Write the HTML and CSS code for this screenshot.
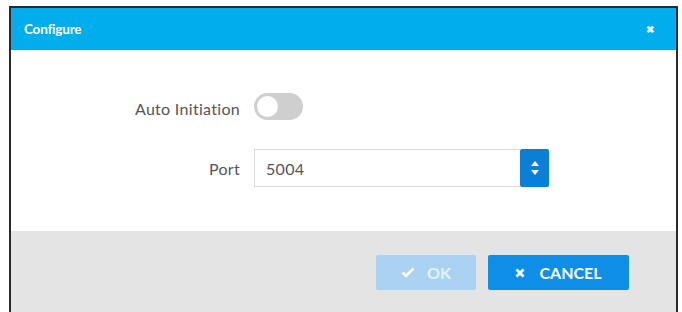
FILE: index.html
```html
<!DOCTYPE html>
<html>
<head>
<meta charset="utf-8">
<link rel="stylesheet" href="styles.css">
</head>
<body>
<div class="dialog">
  <div class="header">
    <span class="title">Configure</span>
    <span class="close">&#x2716;</span>
  </div>
  <div class="body">
    <div class="row row-toggle">
      <label class="label">Auto Initiation</label>
      <span class="toggle"><span class="knob"></span></span>
    </div>
    <div class="row row-port">
      <label class="label">Port</label>
      <div class="numfield">
        <span class="value">5004</span>
        <span class="spin">
          <svg width="10" height="20" viewBox="0 0 10 20"><path d="M5 3 L9 8 H1 Z" fill="#fff"/><path d="M5 17 L9 12 H1 Z" fill="#fff"/></svg>
        </span>
      </div>
    </div>
  </div>
  <div class="footer">
    <button class="btn btn-ok"><svg width="14" height="11" viewBox="0 0 14 11"><path d="M1.5 5.5 L5 9 L12.5 1.5" stroke="#fff" stroke-width="2.6" fill="none"/></svg>OK</button>
    <button class="btn btn-cancel"><svg width="10" height="10" viewBox="0 0 10 10"><path d="M1.5 1.5 L8.5 8.5 M8.5 1.5 L1.5 8.5" stroke="#fff" stroke-width="2.8" fill="none"/></svg>CANCEL</button>
  </div>
</div>
</body>
</html>
```
FILE: styles.css
```css
html, body { margin: 0; padding: 0; background: #fff; }
body { font-family: Lato, "Open Sans", sans-serif; }
.dialog {
  margin: 6px 0 0 9px;
  width: 669px;
  height: 306px;
  border: 2px solid #2a2a2a;
  border-bottom: none;
  box-sizing: border-box;
  display: flex;
  flex-direction: column;
}
.header {
  height: 42px;
  background: #02adee;
  display: flex;
  align-items: center;
  justify-content: space-between;
  padding: 0 22px 0 13px;
  color: #fff;
}
.title { font-size: 13.5px; font-weight: 700; letter-spacing: -0.2px; }
.close { font-size: 10px; font-weight: 700; }
.body {
  height: 181px;
  background: #fff;
  display: flex;
  flex-direction: column;
}
.row { display: flex; align-items: center; }
.label {
  width: 243px;
  text-align: right;
  font-size: 16px;
  letter-spacing: 0.3px;
  color: #555;
  padding-right: 14px;
  box-sizing: border-box;
}
.row-toggle { margin-top: 43px; height: 26px; }
.row-toggle .label { margin-top: 4px; }
.row-port { margin-top: 30px; }
.toggle {
  width: 49px;
  height: 27px;
  border-radius: 14px;
  background: #cfcfcf;
  position: relative;
  box-sizing: border-box;
}
.knob {
  position: absolute;
  left: 3px;
  top: 3px;
  width: 21px;
  height: 21px;
  border-radius: 50%;
  background: #fff;
}
.numfield {
  display: flex;
  align-items: stretch;
  height: 38px;
}
.value {
  width: 266px;
  box-sizing: border-box;
  border: 1px solid #dcdcdc;
  border-right: none;
  display: flex;
  align-items: center;
  padding-left: 11px;
  font-size: 16px;
  letter-spacing: 0.3px;
  color: #555;
}
.spin {
  width: 29px;
  background: #0a7fd8;
  border-radius: 2px;
  display: flex;
  align-items: center;
  justify-content: center;
}
.footer {
  flex: 1;
  background: #e4e4e4;
  display: flex;
  justify-content: flex-end;
  align-items: flex-start;
  padding: 24px 47px 0 0;
  gap: 12px;
}
.btn {
  height: 35px;
  border: none;
  border-radius: 2px;
  color: #fff;
  font-family: Lato, "Open Sans", sans-serif;
  font-size: 16px;
  font-weight: 700;
  display: flex;
  align-items: center;
  justify-content: center;
  gap: 14px;
  padding: 0;
}
.btn-ok { width: 100px; background: #a9d3f0; color: #e6f2fb; gap: 12px; }
.btn-cancel { width: 141px; background: #0e8ee6; }
```
